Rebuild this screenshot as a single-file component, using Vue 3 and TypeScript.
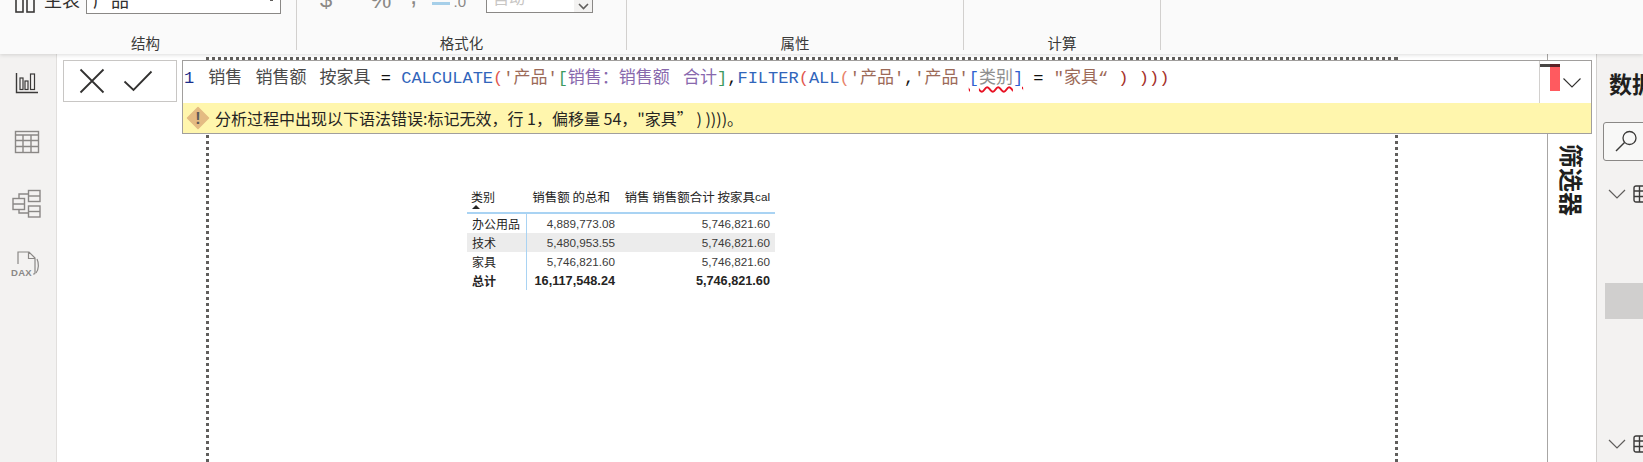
<script setup lang="ts">
interface Token { t: string; c: string }
const tokensBefore: Token[] = [
  { t: '销售 销售额 按家具', c: 'id' },
  { t: ' = ', c: 'op' },
  { t: 'CALCULATE', c: 'fn' },
  { t: '(', c: 'p1' },
  { t: "'产品'", c: 'str' },
  { t: '[', c: 'br' },
  { t: '销售\uFF1A销售额 合计', c: 'col' },
  { t: ']', c: 'br' },
  { t: ',', c: 'op' },
  { t: 'FILTER', c: 'fn' },
  { t: '(', c: 'p1' },
  { t: 'ALL', c: 'fn' },
  { t: '(', c: 'p2' },
  { t: "'产品'", c: 'str' },
  { t: ',', c: 'op' },
  { t: "'产品'", c: 'str' }
]
const tokensAfter: Token[] = [
  { t: ' = ', c: 'op' },
  { t: '"家具\u201C', c: 'str' },
  { t: ' ) ', c: 'p3' },
  { t: ')))', c: 'p3' }
]
const errorText = '分析过程中出现以下语法错误:标记无效\uFF0C行 1\uFF0C偏移量 54\uFF0C"家具\u201D ) ))))\u3002'
interface Row { name: string; a: string; b: string; cls: string }
const rows: Row[] = [
  { name: '办公用品', a: '4,889,773.08', b: '5,746,821.60', cls: '' },
  { name: '技术', a: '5,480,953.55', b: '5,746,821.60', cls: 'alt' },
  { name: '家具', a: '5,746,821.60', b: '5,746,821.60', cls: '' },
  { name: '总计', a: '16,117,548.24', b: '5,746,821.60', cls: 'total' }
]
const groups = ['结构', '格式化', '属性', '计算']
</script>

<template>
  <div class="app">
    <header class="ribbon">
      <section v-for="(g, i) in groups" :key="g" class="group" :class="'g' + i">
        <div class="controls">
          <template v-if="i === 0">
            <svg class="mini" width="22" height="15" viewBox="0 0 22 15" fill="none" stroke="#3b3a39" stroke-width="1.6">
              <rect x="2" y="-6" width="7" height="19" />
              <rect x="13" y="-6" width="7" height="19" />
            </svg>
            <span class="ctl-label">主表</span>
            <div class="select wide"><span>产品</span><i class="tick"></i></div>
          </template>
          <template v-if="i === 1">
            <span class="fmt dollar">$</span>
            <span class="fmt pct">%</span>
            <span class="fmt comma">,</span>
            <span class="fmt dec"><b></b>.0</span>
            <div class="select small">
              <span>自动</span>
              <em>
                <svg width="11" height="7" viewBox="0 0 11 7" fill="none" stroke="#605e5c" stroke-width="1.6"><path d="M1 1l4.500 4.500L10 1" /></svg>
              </em>
            </div>
          </template>
        </div>
        <div class="group-label">{{ g }}</div>
      </section>
    </header>

    <div class="main">
      <nav class="rail">
        <svg class="r1" width="24" height="22" viewBox="0 0 24 22" fill="none" stroke="#3b3a39" stroke-width="1.200">
          <path d="M1.500 1v19.500H23" stroke-width="1.400" />
          <rect x="5" y="6" width="3" height="11.500" />
          <rect x="10" y="9" width="3" height="8.500" />
          <rect x="15.500" y="2" width="4" height="15.500" />
        </svg>
        <svg class="r2" width="26" height="24" viewBox="0 0 26 24" fill="none" stroke="#8a8886" stroke-width="1.400">
          <rect x="1.500" y="1.500" width="23" height="21" />
          <path d="M1.500 5h23M1.500 10.500h23M1.500 16.500h23M9 5v17.500M17 5v17.500" />
        </svg>
        <svg class="r3" width="30" height="30" viewBox="0 0 30 30" fill="none" stroke="#8a8886" stroke-width="1.400">
          <rect x="16.500" y="1.500" width="11.500" height="11" />
          <path d="M16.500 7h11.500" />
          <rect x="16.500" y="17" width="11.500" height="11" />
          <path d="M16.500 22.500h11.500" />
          <rect x="1" y="9.500" width="11.500" height="11" />
          <path d="M1 15h11.500M7 9.500V5h9.500M7 20.500V24h9.500" />
        </svg>
        <svg class="r4" width="30" height="26" viewBox="0 0 30 26" fill="none" stroke="#8a8886" stroke-width="1.200">
          <path d="M7 13V1h11l6 6v15a1 1 0 0 1-1 1h-1M17.500 1v6.500H24" />
          <path d="M26 8c2 4 2 10-1 14" />
          <text x="0" y="24.500" class="dax">DAX</text>
        </svg>
      </nav>

      <main class="canvas">
        <div class="page">
          <div class="matrix">
            <div class="cell head first">类别<i class="sort"></i></div>
            <div class="cell head num pad">销售额 的总和</div>
            <div class="cell head num">销售 销售额合计 按家具<span class="latin">cal</span></div>
            <template v-for="r in rows" :key="r.name">
              <div class="cell first" :class="r.cls">{{ r.name }}</div>
              <div class="cell num" :class="r.cls"><span class="digits">{{ r.a }}</span></div>
              <div class="cell num" :class="r.cls"><span class="digits">{{ r.b }}</span></div>
            </template>
          </div>
        </div>
      </main>

      <aside class="filters"><span class="filters-title">筛选器</span></aside>

      <aside class="fields">
        <div class="fields-title">数据</div>
        <div class="search">
          <svg width="24" height="24" viewBox="0 0 24 24" fill="none" stroke="#3b3a39" stroke-width="1.300">
            <circle cx="15.500" cy="9" r="6.500" />
            <path d="M10.500 13.500L2 22" stroke-width="1.500" />
          </svg>
        </div>
        <div class="table-row">
          <svg width="18" height="10" viewBox="0 0 18 10" fill="none" stroke="#605e5c" stroke-width="1.200"><path d="M1 1l8 8 8-8" /></svg>
          <svg class="tbl" width="20" height="18" viewBox="0 0 20 18" fill="none" stroke="#3b3a39" stroke-width="1.400">
            <rect x="1" y="1" width="24" height="16" rx="2" />
            <path d="M1 6h19M1 11.500h19M6.500 1v16M13 1v16" />
          </svg>
        </div>
        <div class="grey-block"></div>
        <div class="table-row last">
          <svg width="18" height="10" viewBox="0 0 18 10" fill="none" stroke="#605e5c" stroke-width="1.200"><path d="M1 1l8 8 8-8" /></svg>
          <svg class="tbl" width="20" height="18" viewBox="0 0 20 18" fill="none" stroke="#3b3a39" stroke-width="1.400">
            <rect x="1" y="1" width="24" height="16" rx="2" />
            <path d="M1 6h19M1 11.500h19M6.500 1v16M13 1v16" />
          </svg>
        </div>
      </aside>
    </div>

    <div class="formula-overlay">
      <div class="commit">
        <svg width="26" height="26" viewBox="0 0 26 26" fill="none" stroke="#323130" stroke-width="1.800"><path d="M1.500 1.500l23 23M24.500 1.500l-23 23" /></svg>
        <svg width="30" height="22" viewBox="0 0 30 22" fill="none" stroke="#323130" stroke-width="1.800"><path d="M1.500 11.500L10.500 20 28.500 1.500" /></svg>
      </div>
      <div class="formula">
        <div class="editor">
          <div class="code">
            <span class="ln">1</span><span v-for="(k, i) in tokensBefore" :key="i" :class="k.c">{{ k.t }}</span><span class="bad"><span class="edge">[</span>类别<span class="edge">]</span></span><span v-for="(k, i) in tokensAfter" :key="'a' + i" :class="k.c">{{ k.t }}</span>
          </div>
          <div class="gutter">
            <i class="mark"></i>
            <svg width="18" height="10" viewBox="0 0 18 10" fill="none" stroke="#323130" stroke-width="1.100"><path d="M.5 .5l8.500 8.500L17.500 .5" /></svg>
          </div>
        </div>
        <div class="error">
          <svg width="24" height="24" viewBox="0 0 24 24">
            <path d="M12 1.500L22.500 12 12 22.500 1.500 12z" fill="#e4bb83" stroke="#e4bb83" stroke-width="1.500" stroke-linejoin="round" />
            <text x="12" y="18" class="bang">!</text>
          </svg>
          <span>{{ errorText }}</span>
        </div>
      </div>
    </div>
  </div>
</template>

<style>
html, body { margin: 0; background: #fff; overflow: hidden; }
</style>

<style scoped>
.app {
  position: relative;
  width: 1643px;
  height: 462px;
  overflow: hidden;
  display: flex;
  flex-direction: column;
  font-family: "Noto Sans CJK SC", "Liberation Sans", sans-serif;
  color: #323130;
}
.ribbon {
  position: relative;
  z-index: 2;
  height: 54px;
  flex: none;
  display: flex;
  background: #fafafa;
  box-shadow: 0 1px 4px rgba(0, 0, 0, .14);
}
.group {
  box-sizing: border-box;
  height: 50px;
  border-right: 1px solid #d2d0ce;
}
.g0 { width: 297px; }
.g1 { width: 330px; }
.g2 { width: 337px; }
.g3 { width: 197px; }
.controls {
  height: 14px;
  display: flex;
  align-items: flex-end;
  overflow: hidden;
  position: relative;
}
.group-label {
  font-size: 14.500px;
  line-height: 20px;
  text-align: center;
  margin-top: 19px;
  color: #3b3a39;
}
.g0 .group-label { padding-right: 5px; }
.mini { margin: 0 0 0 14px; flex: none; }
.ctl-label { font-size: 18px; line-height: 20px; margin: 0 6px 5px 8px; color: #323130; white-space: nowrap; }
.select {
  box-sizing: border-box;
  height: 40px;
  border: 1px solid #8a8886;
  background: #fff;
  flex: none;
  display: flex;
  align-items: flex-end;
  position: relative;
}
.wide { width: 195px; }
.wide span { font-size: 18px; line-height: 20px; margin: 0 0 4px 6px; }
.tick { position: absolute; right: 7px; bottom: 12px; width: 3px; height: 2px; background: #605e5c; }
.small { width: 107px; margin-left: 20px; height: 40px; margin-bottom: 1px; }
.small span { font-size: 16px; line-height: 20px; margin: 0 0 5px 6px; color: #c8c6c4; }
.small em { position: absolute; right: 0; top: 0; bottom: 0; width: 18px; background: #f3f2f1; display: flex; align-items: flex-end; justify-content: center; padding-bottom: 2px; }
.fmt { font-family: "Liberation Sans", sans-serif; color: #8a8886; font-size: 22px; line-height: 22px; white-space: nowrap; flex: none; margin-bottom: 3px; }
.dollar { margin-left: 23px; width: 50px; }
.pct { width: 40px; font-size: 24px; }
.comma { width: 22px; font-size: 26px; margin-bottom: 8px; }
.dec { width: 34px; position: relative; font-size: 15px; text-align: right; margin-bottom: 1px; }
.dec b { position: absolute; left: 0; bottom: 8px; width: 18px; height: 3px; background: #a6cfe9; }

.main { flex: 1; min-height: 0; display: flex; }
.rail {
  box-sizing: border-box;
  width: 57px;
  flex: none;
  background: #f3f2f1;
  border-right: 1px solid #e1dfdd;
  position: relative;
}
.rail svg { position: absolute; }
.r1 { left: 15px; top: 18px; }
.r2 { left: 14px; top: 76px; }
.r3 { left: 12px; top: 135px; }
.r4 { left: 11px; top: 197px; }
.dax { font: 700 9.500px "Liberation Sans", sans-serif; fill: #8a8886; stroke: none; letter-spacing: .3px; }

.canvas {
  flex: 1;
  min-width: 0;
  background: #fff;
  display: flex;
  justify-content: center;
  padding-top: 3px;
  border-right: 1px solid #a8a6a4;
}
.page {
  box-sizing: border-box;
  width: 1192px;
  height: 440px;
  padding: 129px 0 0 261px;
  background:
    repeating-linear-gradient(90deg, #605e5c 0 3px, transparent 3px 6px) 0 0 / 100% 3px no-repeat,
    repeating-linear-gradient(180deg, #605e5c 0 3px, transparent 3px 6px) 0 0 / 3px 100% no-repeat,
    repeating-linear-gradient(180deg, #605e5c 0 3px, transparent 3px 6px) 100% 0 / 3px 100% no-repeat;
}
.matrix {
  display: grid;
  grid-template-columns: 60px 93px 155px;
  grid-auto-rows: 19px;
  grid-template-rows: 28px;
  font-size: 12px;
  color: #252423;
}
.cell {
  display: flex;
  align-items: center;
  line-height: 18px;
  white-space: nowrap;
  padding: 0 5px;
  box-sizing: border-box;
}
.cell.first { border-right: 1.500px solid #a9d3f3; }
.cell.num { justify-content: flex-end; }
.cell.head {
  border-bottom: 2px solid #a9d3f3;
  border-right: 0;
  align-items: flex-start;
  padding-top: 2px;
  font-size: 12.500px;
  position: relative;
}
.cell.head.first { font-size: 12px; padding-left: 4px; }
.cell.head.pad { padding-right: 10px; }
.sort { position: absolute; left: 5px; bottom: 3px; width: 0; height: 0; border: 4px solid transparent; border-top: 0; border-bottom: 4px solid #252423; }
.latin, .digits { font-family: "Liberation Sans", sans-serif; font-size: 11.700px; }
.digits { color: #3b3a39; }
.alt { background: #ececec; }
.total { font-weight: 700; }
.total .digits { font-size: 12.700px; color: #252423; }

.filters {
  box-sizing: border-box;
  width: 48px;
  flex: none;
  background: #fff;
  padding: 90px 0 0 12px;
}
.filters-title {
  writing-mode: vertical-rl;
  text-orientation: sideways;
  font-size: 24px;
  line-height: 25px;
  font-weight: 700;
  color: #201f1e;
}
.fields {
  box-sizing: border-box;
  width: 47px;
  flex: none;
  overflow: hidden;
  background: #f3f2f1;
  border-left: 1px solid #d2d0ce;
  padding: 15px 0 0 6px;
}
.fields-title {
  font-size: 23px;
  line-height: 28px;
  font-weight: 700;
  margin-left: 6px;
  white-space: nowrap;
  color: #201f1e;
}
.search {
  box-sizing: border-box;
  width: 60px;
  height: 39px;
  margin-top: 25px;
  border: 1px solid #8a8886;
  border-radius: 3px;
  background: #f8f8f7;
  padding: 6px 0 0 10px;
}
.table-row { display: flex; align-items: center; height: 22px; margin: 22px 0 0 5px; gap: 7px; }
.table-row svg { flex: none; }
.grey-block { width: 60px; height: 36px; margin-top: 78px; margin-left: 2px; background: #d0cfce; }
.table-row.last { margin-top: 114px; }

.formula-overlay {
  position: absolute;
  z-index: 3;
  left: 63px;
  top: 60px;
  display: flex;
  align-items: flex-start;
  gap: 5px;
}
.commit {
  box-sizing: border-box;
  width: 114px;
  height: 42px;
  background: #fff;
  border: 1.500px solid #c8c6c4;
  display: flex;
  align-items: center;
  padding-left: 15px;
  gap: 18px;
}
.formula {
  box-sizing: border-box;
  width: 1410px;
  height: 74px;
  border: 1.500px solid #a19f9d;
  background: #fff;
  display: flex;
  flex-direction: column;
}
.editor { height: 42px; display: flex; flex: none; }
.code {
  flex: 1;
  min-width: 0;
  padding: 7px 0 0 1px;
  font-family: "Liberation Mono", "Noto Sans CJK SC", monospace;
  font-size: 17px;
  line-height: 21px;
  white-space: pre;
}
.ln { color: #1a2f8c; margin-right: 14px; }
.id { color: #4a4a4a; word-spacing: 3px; }
.op { color: #111; }
.fn { color: #3165bb; }
.p1 { color: #e2574f; }
.p2 { color: #e8836a; }
.p3 { color: #a5312b; }
.str { color: #9c6a58; }
.br { color: #3d9a5f; }
.col { color: #8868ad; word-spacing: 3px; }
.bad {
  color: #8f8f8f;
  text-decoration: underline wavy #e81123 1.500px;
  text-underline-offset: 3px;
}
.edge { color: #2f5fd0; }
.gutter {
  box-sizing: border-box;
  width: 52px;
  flex: none;
  border-left: 1px solid #d2d0ce;
  position: relative;
}
.mark { position: absolute; left: 0; top: 3px; width: 20px; height: 3px; background: #484644; }
.mark::after { content: ""; position: absolute; left: 10px; top: 0; width: 10px; height: 27px; background: #ff5a5f; border-top: 3px solid #5b2226; box-sizing: border-box; }
.gutter svg { position: absolute; left: 23px; top: 17px; }
.error {
  flex: 1;
  background: #fff6ad;
  display: flex;
  align-items: center;
  padding-left: 3px;
  gap: 5px;
  font-size: 16px;
  color: #252423;
  white-space: pre;
}
.error svg { flex: none; }
.bang { font: 700 16px "Liberation Sans", sans-serif; fill: #5c5a58; text-anchor: middle; }
</style>
